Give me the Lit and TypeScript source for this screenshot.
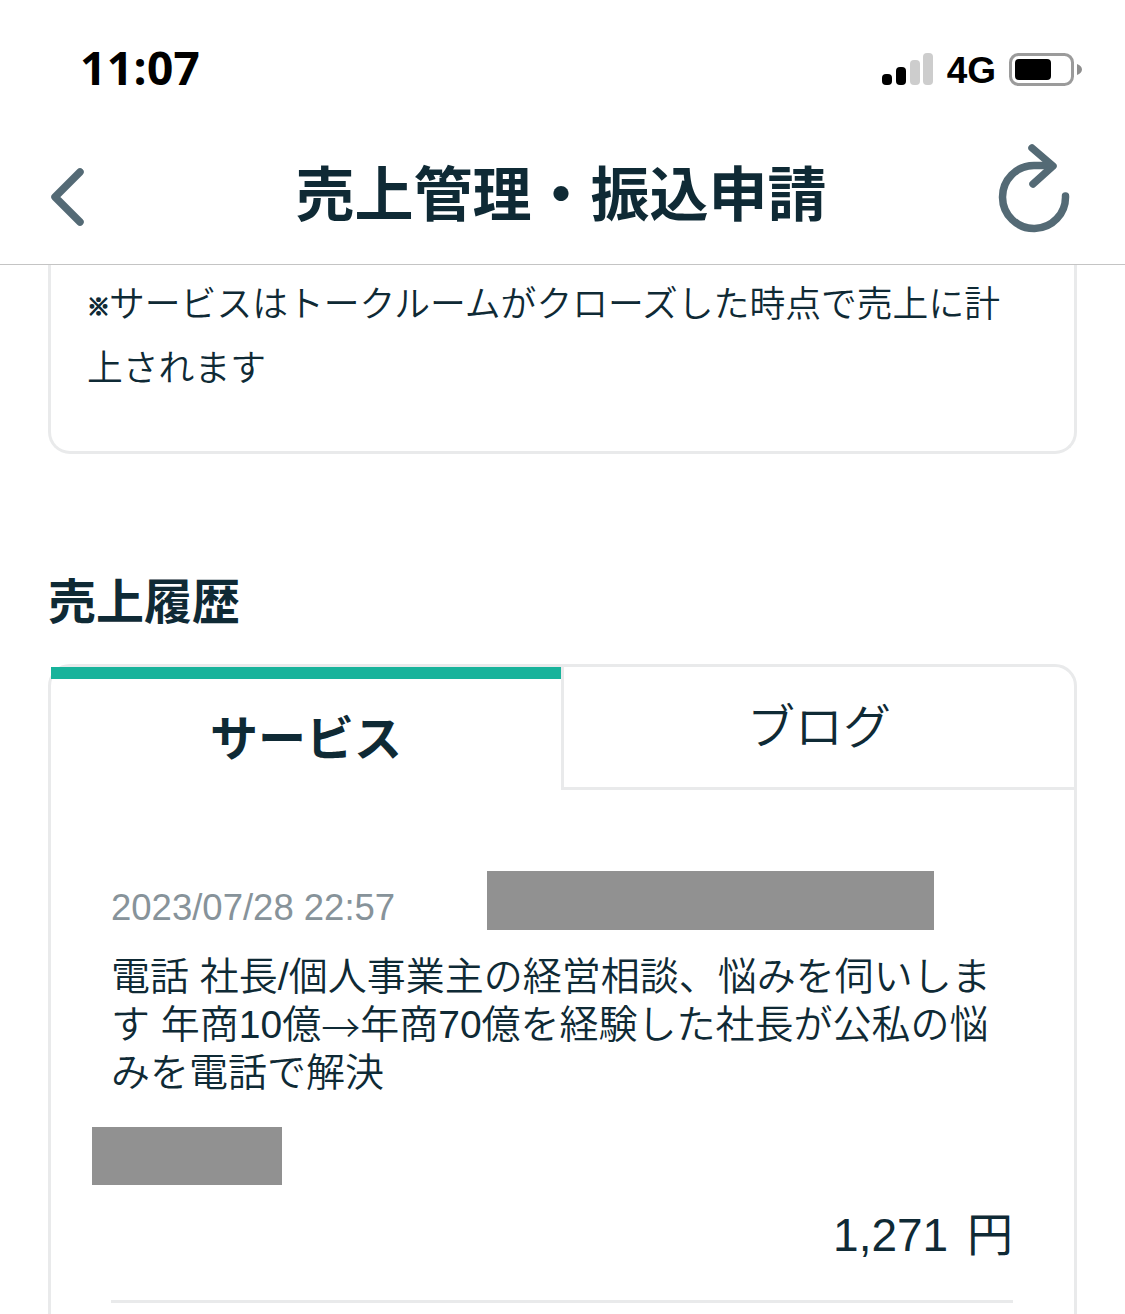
import { LitElement, html, css } from "lit";
import { customElement } from "lit/decorators.js";

@customElement("app-root")
export class AppRoot extends LitElement {
  static styles = css`
    :host {
      display: block;
      width: 1125px;
      height: 1314px;
      overflow: hidden;
      background: #fff;
      color: #0f2a35;
      font-family: "Noto Sans CJK JP", "Liberation Sans", sans-serif;
    }
    .status {
      height: 130px;
      display: flex;
      align-items: flex-start;
      justify-content: space-between;
      padding: 0 43px 0 80px;
      box-sizing: border-box;
    }
    .time {
      font-family: "Open Sans", sans-serif;
      font-weight: 700;
      font-size: 46px;
      line-height: 60px;
      margin-top: 37px;
      color: #000;
      letter-spacing: 0.4px;
    }
    .status-right {
      display: flex;
      align-items: center;
      margin-top: 52px;
    }
    .net {
      font-family: "Liberation Sans", sans-serif;
      font-weight: 700;
      font-size: 37px;
      line-height: 33px;
      color: #000;
      margin: 2px 13px 0 13px;
    }
    .header {
      height: 135px;
      box-sizing: border-box;
      border-bottom: 1px solid #c4c4c4;
      display: grid;
      grid-template-columns: 1fr auto 1fr;
      align-items: center;
      padding: 0 51px 0 48px;
    }
    .header h1 {
      margin: 0;
      font-size: 59px;
      line-height: 70px;
      font-weight: 700;
      position: relative;
      top: -6px;
    }
    .refresh {
      justify-self: end;
      align-self: start;
      margin-top: 14px;
      display: block;
    }
    .notes {
      margin: 0 48px;
      border: 3px solid #e9eaeb;
      border-top: none;
      border-radius: 0 0 22px 22px;
      padding: 4px 40px 54px 36px;
      font-size: 35.8px;
      line-height: 64px;
      font-weight: 350;
    }
    .notes .mark {
      display: inline-block;
      vertical-align: top;
      width: 22px;
      height: 64px;
      line-height: 72px;
      font-size: 23px;
      font-weight: 700;
      -webkit-text-stroke: 1.3px #0f2a35;
    }
    h2 {
      margin: 115px 0 37px 48px;
      font-size: 48px;
      line-height: 58px;
      font-weight: 700;
    }
    .panel {
      margin: 0 48px;
      border: 3px solid #e9eaeb;
      border-radius: 22px 22px 0 0;
      height: 800px;
    }
    .tabs {
      display: grid;
      grid-template-columns: 510px 1fr;
      grid-template-rows: 123px;
    }
    .tab {
      text-align: center;
      font-size: 48px;
      box-sizing: border-box;
      line-height: 112px;
    }
    .tab.active {
      border-top: 12px solid #18b39b;
      font-weight: 700;
    }
    .tab.idle {
      border-left: 3px solid #e9eaeb;
      border-bottom: 3px solid #e9eaeb;
      font-weight: 350;
    }
    .item {
      padding: 81px 61px 0 60px;
    }
    .meta {
      display: flex;
      align-items: flex-start;
      height: 82px;
    }
    .date {
      font-family: "Liberation Sans", sans-serif;
      font-size: 36.5px;
      line-height: 44px;
      margin-top: 15px;
      color: #87939a;
      width: 376px;
      white-space: nowrap;
    }
    .redact {
      background: #919191;
      display: block;
    }
    .r1 {
      width: 447px;
      height: 59px;
    }
    .r2 {
      width: 190px;
      height: 58px;
      margin: 30px 0 0 -19px;
    }
    .desc {
      margin: 0;
      font-family: "Liberation Sans", "Noto Sans CJK JP", sans-serif;
      font-size: 39px;
      line-height: 48px;
      font-weight: 350;
    }
    .arrow {
      display: inline-block;
      vertical-align: top;
      font-family: "Noto Sans CJK JP", sans-serif;
      font-weight: 300;
    }
    .amount {
      text-align: right;
      font-family: "Liberation Sans", "Noto Sans CJK JP", sans-serif;
      font-size: 46px;
      line-height: 60px;
      word-spacing: 6px;
      margin-top: 20px;
      padding-bottom: 35px;
      border-bottom: 3px solid #e9eaeb;
    }
  `;

  render() {
    return html`
      <div class="status">
        <div class="time">11:07</div>
        <div class="status-right">
          <svg width="52" height="33" viewBox="0 0 52 33">
            <rect x="0" y="21" width="10" height="11" rx="4" fill="#000" />
            <rect x="14" y="14" width="10" height="18" rx="4" fill="#000" />
            <rect x="28" y="7" width="10" height="25" rx="4" fill="#cdcdcd" />
            <rect x="41" y="0" width="10" height="32" rx="4" fill="#cdcdcd" />
          </svg>
          <span class="net">4G</span>
          <svg width="73" height="33" viewBox="0 0 73 33">
            <rect x="1.5" y="1.5" width="62" height="30" rx="8" fill="none" stroke="#9b9b9b" stroke-width="3" />
            <rect x="6" y="6" width="36" height="21" rx="4" fill="#000" />
            <path d="M68 11 C71 12 73 14 73 16.5 C73 19 71 21 68 22 Z" fill="#8e8e8e" />
          </svg>
        </div>
      </div>
      <div class="header">
        <svg width="38" height="62" viewBox="0 0 38 62">
          <path d="M32 6 L7 31 L32 56" fill="none" stroke="#546a75" stroke-width="7.5" stroke-linecap="round" stroke-linejoin="round" />
        </svg>
        <h1>売上管理・振込申請</h1>
        <svg class="refresh" width="78" height="92" viewBox="0 0 78 92">
          <path d="M69.5 52 A31.5 31.5 0 1 1 38 21.5 L55 21.5" fill="none" stroke="#546a75" stroke-width="7.5" stroke-linecap="round" />
          <path d="M36 4 L57 22 L37 40" fill="none" stroke="#546a75" stroke-width="7.5" stroke-linecap="round" stroke-linejoin="round" />
        </svg>
      </div>
      <div class="notes"><span class="mark">※</span>サービスはトークルームがクローズした時点で売上に計上されます</div>
      <h2>売上履歴</h2>
      <div class="panel">
        <div class="tabs">
          <div class="tab active">サービス</div>
          <div class="tab idle">ブログ</div>
        </div>
        <div class="item">
          <div class="meta">
            <div class="date">2023/07/28 22:57</div>
            <span class="redact r1"></span>
          </div>
          <p class="desc">電話 社長/個人事業主の経営相談、悩みを伺いします 年商10億<span class="arrow">→</span>年商70億を経験した社長が公私の悩みを電話で解決</p>
          <span class="redact r2"></span>
          <div class="amount">1,271 円</div>
        </div>
      </div>
    `;
  }
}
